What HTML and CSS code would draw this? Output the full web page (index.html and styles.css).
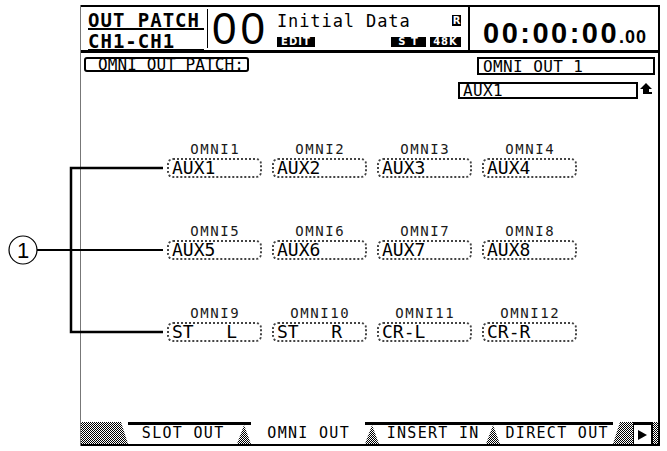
FILE: index.html
```html
<!DOCTYPE html>
<html lang="en">

<head>
    <meta charset="UTF-8">
    <title>OMNI OUT PATCH</title>
    <link rel="stylesheet" href="styles.css">
</head>

<body>
    <!-- callout (1) pointing at the patch boxes -->
    <svg class="callout" width="170" height="451" viewBox="0 0 170 451">
        <circle cx="23" cy="250" r="14" fill="#fff" stroke="#000" stroke-width="1.2" />
        <text x="23" y="258" text-anchor="middle" font-family="Liberation Sans, sans-serif" font-size="22">1</text>
        <path d="M37 250H163" stroke="#000" stroke-width="2" fill="none" />
        <path d="M163 168H71V332H163" stroke="#000" stroke-width="2.5" fill="none" />
    </svg>

    <div class="lcd">
        <div class="head">
            <div class="patch">
                <div class="patch-line">OUT PATCH</div>
                <div class="patch-line">CH1-CH1</div>
            </div>
            <div class="scene-no">00</div>
            <div class="scene">
                <div class="scene-row">
                    <span class="scene-name">Initial Data</span>
                    <span class="tag tag-r">R</span>
                </div>
                <div class="scene-row">
                    <span class="tag tag-edit">EDIT</span>
                    <span class="tag tag-st">S T</span>
                    <span class="tag tag-fs">48K</span>
                </div>
            </div>
            <div class="timecode">00:00:00<span class="frames">.00</span></div>
        </div>

        <div class="page">
            <div class="page-top">
                <div class="page-title">OMNI OUT PATCH:</div>
                <div class="select">
                    <div class="port-name">OMNI OUT 1</div>
                    <div class="source-row">
                        <div class="source">AUX1</div>
                        <svg class="enter" width="13" height="12" viewBox="0 0 13 12">
                            <path d="M6 0L12 6H9V9H12V11H3V6H0Z" fill="#000" />
                        </svg>
                    </div>
                </div>
            </div>

            <div class="patch-grid">
                <div class="cell"><div class="cell-label">OMNI1</div><div class="cell-box">AUX1</div></div>
                <div class="cell"><div class="cell-label">OMNI2</div><div class="cell-box">AUX2</div></div>
                <div class="cell"><div class="cell-label">OMNI3</div><div class="cell-box">AUX3</div></div>
                <div class="cell"><div class="cell-label">OMNI4</div><div class="cell-box">AUX4</div></div>
                <div class="cell"><div class="cell-label">OMNI5</div><div class="cell-box">AUX5</div></div>
                <div class="cell"><div class="cell-label">OMNI6</div><div class="cell-box">AUX6</div></div>
                <div class="cell"><div class="cell-label">OMNI7</div><div class="cell-box">AUX7</div></div>
                <div class="cell"><div class="cell-label">OMNI8</div><div class="cell-box">AUX8</div></div>
                <div class="cell"><div class="cell-label">OMNI9</div><div class="cell-box">ST   L</div></div>
                <div class="cell"><div class="cell-label">OMNI10</div><div class="cell-box">ST   R</div></div>
                <div class="cell"><div class="cell-label">OMNI11</div><div class="cell-box">CR-L</div></div>
                <div class="cell"><div class="cell-label">OMNI12</div><div class="cell-box">CR-R</div></div>
            </div>
        </div>

        <div class="tabs">
            <span class="fill fill-start"></span>
            <span class="tab">SLOT OUT</span>
            <span class="sep"><i></i></span>
            <span class="tab on">OMNI OUT</span>
            <span class="sep"><i></i></span>
            <span class="tab">INSERT IN</span>
            <span class="sep"><i></i></span>
            <span class="tab">DIRECT OUT</span>
            <span class="fill fill-end"></span>
            <span class="next">
                <svg width="9" height="10" viewBox="0 0 9 10"><path d="M0 0L9 5L0 10Z" fill="#000" /></svg>
            </span>
            <span class="fill fill-tail"></span>
        </div>
    </div>
</body>

</html>
```

FILE: styles.css
```css
body {
    margin: 0;
    width: 667px;
    height: 451px;
    background: #fff;
    color: #000;
    font-family: "DejaVu Sans Mono", monospace;
    position: relative;
    overflow: hidden;
}

.callout {
    position: absolute;
    top: 0;
    left: 0;
    z-index: 2;
}

.lcd {
    width: 580px;
    height: 441px;
    margin: 5px 0 0 80px;
    box-sizing: border-box;
    border-left: 1px solid #777;
    border-right: 2px solid #000;
    display: flex;
    flex-direction: column;
}

/* header strip */
.head {
    height: 48px;
    box-sizing: border-box;
    border-top: 2px solid #000;
    border-bottom: 3px solid #000;
    display: flex;
}

.patch {
    width: 127px;
    box-sizing: border-box;
    padding: 3px 3px 0 7px;
    border-right: 1px solid #000;
    margin: 2px 0 2px;
}

.patch-line {
    font-weight: bold;
    font-size: 19px;
    line-height: 16px;
    letter-spacing: 1px;
    border-bottom: 2px solid #000;
}

.patch-line + .patch-line {
    margin-top: 3px;
}

.scene-no {
    font-family: "Liberation Sans", sans-serif;
    font-size: 44px;
    line-height: 40px;
    letter-spacing: 4px;
    margin-left: 4px;
    padding-top: 2px;
}

.scene {
    flex: 1;
    border-right: 2px solid #000;
    padding: 7px 7px 0 8px;
    display: flex;
    flex-direction: column;
}

.scene-row {
    display: flex;
    align-items: flex-start;
}

.scene-row + .scene-row {
    margin-top: 9px;
}

.scene-name {
    font-size: 17px;
    line-height: 14px;
    letter-spacing: 0.9px;
}

.tag {
    background: #000;
    color: #fff;
    font-family: "DejaVu Sans", sans-serif;
    font-weight: bold;
    font-size: 10px;
    line-height: 10px;
    height: 10px;
    letter-spacing: 1px;
    text-align: center;
}

.tag-r {
    margin-left: auto;
    margin-top: 1px;
    width: 9px;
    height: 11px;
    line-height: 11px;
    letter-spacing: 0;
}

.tag-edit {
    width: 38px;
}

.tag-st {
    margin-left: auto;
    width: 35px;
}

.tag-fs {
    margin-left: 4px;
    width: 31px;
}

.timecode {
    width: 188px;
    box-sizing: border-box;
    padding: 11px 0 0 13px;
    font-family: "Liberation Sans", sans-serif;
    font-weight: bold;
    font-size: 29px;
    line-height: 30px;
    letter-spacing: 2.5px;
}

.frames {
    font-size: 18px;
    letter-spacing: 1px;
}

/* page body */
.page {
    padding: 4px 3px 0;
}

.page-top {
    display: flex;
    justify-content: space-between;
    align-items: flex-start;
}

.page-title {
    height: 15px;
    box-sizing: border-box;
    border: 2px solid #000;
    border-radius: 3px;
    padding: 0 3px 0 12px;
    font-size: 16px;
    line-height: 11px;
    letter-spacing: 0.1px;
}

.select {
    display: flex;
    flex-direction: column;
    align-items: flex-end;
}

.port-name {
    width: 178px;
    height: 18px;
    box-sizing: border-box;
    border: 2px solid #000;
    padding: 2px 0 0 4px;
    font-size: 16px;
    line-height: 12px;
    letter-spacing: 0.4px;
}

.source-row {
    display: flex;
    align-items: flex-start;
    margin-top: 7px;
    margin-right: 2px;
}

.source {
    width: 180px;
    height: 17px;
    box-sizing: border-box;
    border: 2px solid #000;
    padding: 1px 0 0 3px;
    font-size: 16px;
    line-height: 12px;
    letter-spacing: 0.4px;
}

.enter {
    margin-left: 2px;
    margin-top: 1px;
}

.patch-grid {
    display: grid;
    grid-template-columns: repeat(4, 95px);
    column-gap: 10px;
    row-gap: 46px;
    margin: 43px 0 0 83px;
}

.cell-label {
    text-align: center;
    font-size: 14px;
    line-height: 14px;
    letter-spacing: 1.6px;
    padding-left: 1.6px;
    color: #1a1a1a;
}

.cell-box {
    height: 20px;
    box-sizing: border-box;
    margin-top: 2px;
    border: 2px dotted #444;
    border-radius: 6px;
    padding-left: 3px;
    font-size: 18px;
    line-height: 16px;
    white-space: pre;
}

/* tab strip along the bottom */
.tabs {
    margin-top: auto;
    height: 24px;
    box-sizing: border-box;
    border-bottom: 2px solid #000;
    display: flex;
}

.fill,
.sep i {
    background: repeating-conic-gradient(#000 0 25%, #fff 0 50%) 0 0 / 2px 2px;
}

.fill-start {
    width: 47px;
    clip-path: polygon(0 0, calc(100% - 7px) 0, 100% 100%, 0 100%);
}

.fill-end {
    width: 20px;
    clip-path: polygon(7px 0, 100% 0, 100% 100%, 0 100%);
}

.fill-tail {
    width: 5px;
}

.tab {
    box-sizing: border-box;
    border-top: 3px solid #000;
    font-size: 15px;
    line-height: 17px;
    letter-spacing: 1.3px;
    padding-left: 1.3px;
    text-align: center;
    white-space: pre;
}

.tab:nth-child(2) {
    width: 109px;
}

.tab:nth-child(4) {
    width: 114px;
}

.tab:nth-child(6) {
    width: 107px;
}

.tab:nth-child(8) {
    width: 113px;
}

.tab.on {
    border-top: 0;
    padding-top: 3px;
}

.sep {
    width: 14px;
    box-sizing: border-box;
    border-top: 3px solid #000;
}

.sep i {
    display: block;
    height: 100%;
    clip-path: polygon(50% 0, 100% 100%, 0 100%);
}

.next {
    width: 20px;
    box-sizing: border-box;
    border-style: solid;
    border-color: #000;
    border-width: 3px 2px 0 1px;
    display: flex;
    align-items: center;
    justify-content: center;
}
```
